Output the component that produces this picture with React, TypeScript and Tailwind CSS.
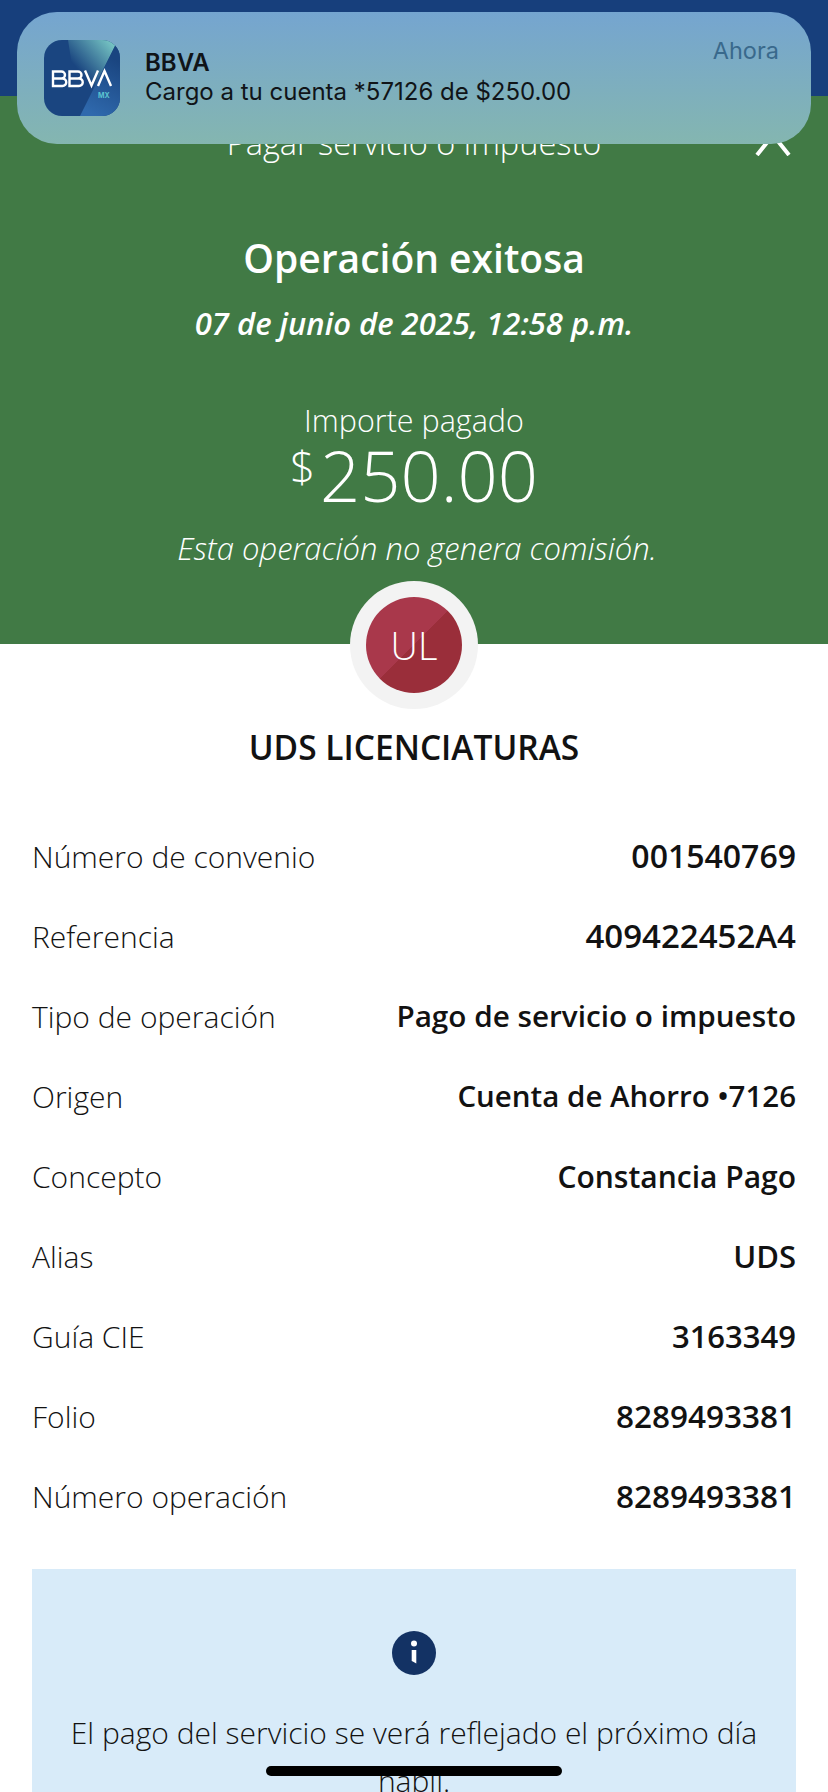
const rows: [string, string, string][] = [
  ["Número de convenio", "001540769", "text-[32px]"],
  ["Referencia", "409422452A4", "text-[33px]"],
  ["Tipo de operación", "Pago de servicio o impuesto", "text-[29.700px]"],
  ["Origen", "Cuenta de Ahorro •7126", "text-[29.500px]"],
  ["Concepto", "Constancia Pago", "text-[30px]"],
  ["Alias", "UDS", "text-[31px]"],
  ["Guía CIE", "3163349", "text-[31px]"],
  ["Folio", "8289493381", "text-[31.500px]"],
  ["Número operación", "8289493381", "text-[31.500px]"],
];

function BbvaIcon() {
  return (
    <svg width="76" height="76" viewBox="0 0 76 76" className="shrink-0">
      <defs>
        <linearGradient id="icteal" gradientUnits="userSpaceOnUse" x1="70" y1="6" x2="38" y2="34">
          <stop offset="0" stopColor="#74c2c2" />
          <stop offset="1" stopColor="#1a4580" />
        </linearGradient>
        <linearGradient id="icblue" gradientUnits="userSpaceOnUse" x1="72" y1="20" x2="44" y2="72">
          <stop offset="0" stopColor="#1a4580" />
          <stop offset="1" stopColor="#2f69ad" />
        </linearGradient>
        <clipPath id="iccl">
          <rect width="76" height="76" rx="18" />
        </clipPath>
      </defs>
      <g clipPath="url(#iccl)">
        <rect width="76" height="76" fill="#1a4580" />
        <path d="M24 0H74L36 76Z" fill="url(#icteal)" />
        <path d="M74 0H76V76H36Z" fill="url(#icblue)" />
      </g>
      <g fill="none" stroke="#fff" strokeWidth="2.400">
        <path d="M9 31.500h8.500a3.500 3.500 0 0 1 0 7h-8.500Zm0 7h9.500a3.700 3.700 0 0 1 0 7.500h-9.500Z" />
        <path d="M25.500 31.500h8.500a3.500 3.500 0 0 1 0 7h-8.500Zm0 7h9.500a3.700 3.700 0 0 1 0 7.500h-9.500Z" />
        <path d="M41 30.500l6.500 15 6.500-15" />
        <path d="M54 46l6.500-15 6.500 15" />
      </g>
      <text x="54" y="58" fill="#5cc4d0" fontSize="7" fontWeight="700" fontFamily="Inter, sans-serif">MX</text>
    </svg>
  );
}

export default function App() {
  return (
    <div className="relative w-[828px] h-[1792px] overflow-hidden bg-white font-['Open_Sans',sans-serif] text-[#121212]">
      <div className="h-[96px] bg-[#173f7c]" />

      <div className="h-[548px] bg-[#417a45] text-white flex flex-col items-center">
        <div className="relative w-full h-[112px]">
          <p className="text-center text-[32.500px] font-light leading-[40px] pt-[27px]">Pagar servicio o impuesto</p>
          <svg width="36" height="24" viewBox="0 0 36 24" className="absolute left-[755px] top-[36px]" fill="none" stroke="#fff" strokeWidth="4">
            <path d="M2 23 18 3l16 20" />
          </svg>
        </div>
        <h1 className="mt-[26px] text-[39px] font-semibold leading-[48px]">Operación exitosa</h1>
        <p className="mt-[23px] text-[31px] font-semibold italic leading-[36px]">07 de junio de 2025, 12:58 p.m.</p>
        <p className="mt-[61px] text-[30.500px] font-light leading-[36px]">Importe pagado</p>
        <div className="flex items-start font-light -mt-[3px]">
          <span className="text-[44px] leading-[50px] mr-[5px] mt-[6px]">$</span>
          <span className="text-[70.500px] leading-[80px]">250.00</span>
        </div>
        <p className="mt-[15px] ml-[6px] text-[31px] font-light italic leading-[36px]">Esta operación no genera comisión.</p>
      </div>

      <div className="absolute left-[350px] top-[581px] w-[128px] h-[128px] rounded-full bg-[#f3f3f3] flex items-center justify-center">
        <div className="w-[96px] h-[96px] rounded-full bg-[linear-gradient(135deg,#a9384b_50%,#9a2e3a_50%)] flex items-center justify-center text-white text-[38px] font-light">
          UL
        </div>
      </div>

      <h2 className="mt-[83px] text-center text-[33.500px] font-semibold leading-[40px]">UDS LICENCIATURAS</h2>

      <dl className="mt-[49px] px-[32px] flex flex-col">
        {rows.map(([k, v, size]) => (
          <div key={k} className="flex justify-between items-center h-[80px]">
            <dt className="text-[30px] font-light">{k}</dt>
            <dd className={`font-semibold ${size}`}>{v}</dd>
          </div>
        ))}
      </dl>

      <div className="mt-[33px] mx-[32px] h-[300px] bg-[#d8ebf9] flex flex-col items-center pt-[62px] px-[32px]">
        <svg width="44" height="44" viewBox="0 0 44 44">
          <circle cx="22" cy="22" r="22" fill="#133264" />
          <circle cx="22" cy="12.500" r="3" fill="#fff" />
          <path d="M19.700 19h4.600v13.500l-3.500-2-1.100-.5Z" fill="#fff" />
        </svg>
        <p className="mt-[34px] text-center text-[30px] font-light leading-[48px]">
          El pago del servicio se verá reflejado el próximo día hábil.
        </p>
      </div>

      <div className="absolute left-[266px] top-[1766px] w-[296px] h-[10px] rounded-full bg-black" />

      <div className="absolute left-[17px] top-[12px] w-[794px] h-[132px] rounded-[40px] bg-[linear-gradient(180deg,#75a5d0_0%,#84b6b0_100%)] flex items-center pl-[27px] pr-[32px]">
        <BbvaIcon />
        <div className="ml-[25px] flex-1 font-['Inter',sans-serif] text-[24px] leading-[29px] text-[#101418] -mt-[2px]">
          <p className="font-semibold">BBVA</p>
          <p>Cargo a tu cuenta *57126 de $250.00</p>
        </div>
        <span className="self-start mt-[21px] font-['Inter',sans-serif] text-[23.500px] text-[#39698c]">Ahora</span>
      </div>
    </div>
  );
}
